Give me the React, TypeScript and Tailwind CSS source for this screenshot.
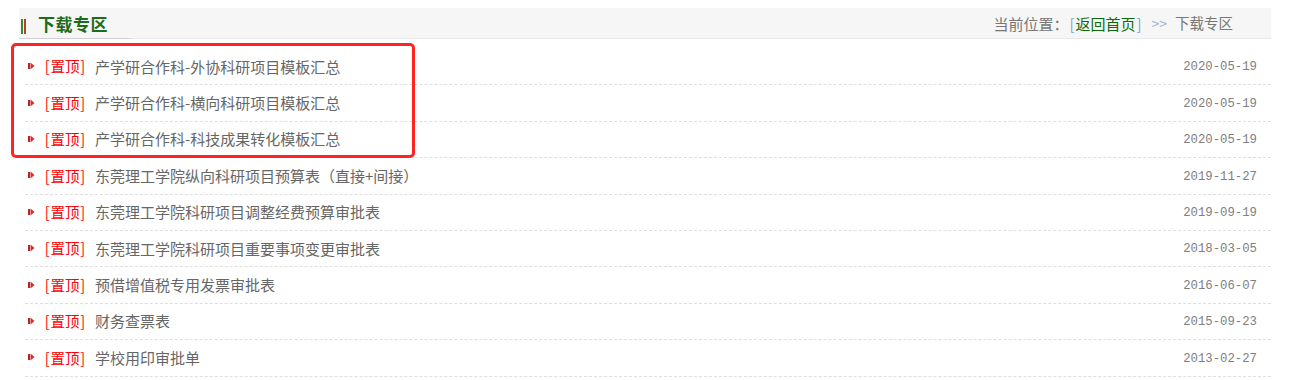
import React from 'react'

const rows = [
  { title: '产学研合作科-外协科研项目模板汇总', date: '2020-05-19' },
  { title: '产学研合作科-横向科研项目模板汇总', date: '2020-05-19' },
  { title: '产学研合作科-科技成果转化模板汇总', date: '2020-05-19' },
  { title: '东莞理工学院纵向科研项目预算表（直接+间接）', date: '2019-11-27' },
  { title: '东莞理工学院科研项目调整经费预算审批表', date: '2019-09-19' },
  { title: '东莞理工学院科研项目重要事项变更审批表', date: '2018-03-05' },
  { title: '预借增值税专用发票审批表', date: '2016-06-07' },
  { title: '财务查票表', date: '2015-09-23' },
  { title: '学校用印审批单', date: '2013-02-27' },
]

const cjk = "font-['Noto_Sans_CJK_SC','Noto_Sans',sans-serif]"

function Bullet() {
  return (
    <svg width="7" height="8" viewBox="0 0 7 8" className="shrink-0">
      <rect x="0" y="1" width="2" height="6" fill="#b3262b" />
      <path d="M2.5 0.5 L6.5 4 L2.5 7.5 Z" fill="#d2302f" />
    </svg>
  )
}

export default function App() {
  return (
    <div className="relative w-[1291px] h-[380px] bg-white overflow-hidden">
      <div className="ml-[19px] mt-[8px] w-[1252px]">
        {/* header bar */}
        <div className="flex items-center justify-between h-[31px] bg-[#f5f6f5] border-b border-[#e8e8e8]">
          <div className="flex items-center h-full border-b border-[#cfcfcf] w-[111px] -mb-px">
            <div className="flex gap-[1px] ml-[2px] mt-[6px]">
              <span className="w-[2px] h-[15px] bg-[#2e8b2e]" />
              <span className="w-[2px] h-[15px] bg-[#c0392b]" />
            </div>
            <span className={`ml-[12px] text-[17px] tracking-[0.5px] leading-none font-bold text-[#1d6b1d] ${cjk}`}>下载专区</span>
          </div>
          <div className={`flex items-center pr-[38px] text-[15px] leading-none text-[#777] ${cjk}`}>
            <span>当前位置：</span>
            <span className="inline-block w-[7px] text-center text-[#7aa6d6]">[</span>
            <span className="text-[#0b6a0b]">返回首页</span>
            <span className="inline-block w-[7px] text-center text-[#7aa6d6]">]</span>
            <span className="ml-[9px] mr-[8px] text-[14px] text-[#9ab0cc]">&gt;&gt;</span>
            <span className="text-[14.5px]">下载专区</span>
          </div>
        </div>

        {/* list */}
        <div className="mt-[10px] ml-[6px]">
          {rows.map((r, i) => (
            <div
              key={i}
              className="flex items-center justify-between h-[36.4px] border-b border-dashed border-[#dedede]"
            >
              <div className={`flex items-center text-[14.5px] leading-none ${cjk}`}>
                <span className="ml-[3px] mt-[-1px]"><Bullet /></span>
                <span className="ml-[9px] inline-block w-[6.5px] text-center text-[#ff0000]">[</span>
                <span className="text-[#ff0000]">置顶</span>
                <span className="inline-block w-[6.5px] text-center text-[#ff0000]">]</span>
                <span className="ml-[9px] mt-[-1px] text-[15px] text-[#666]">{r.title}</span>
              </div>
              <span className="pr-[14px] mt-[2px] font-['Liberation_Mono',monospace] text-[12.3px] text-[#808080]">{r.date}</span>
            </div>
          ))}
        </div>
      </div>

      {/* annotation box */}
      <div className="absolute left-[11px] top-[43px] w-[404px] h-[115px] border-[3px] border-[#ff2424] rounded-[5px] pointer-events-none" />
    </div>
  )
}
